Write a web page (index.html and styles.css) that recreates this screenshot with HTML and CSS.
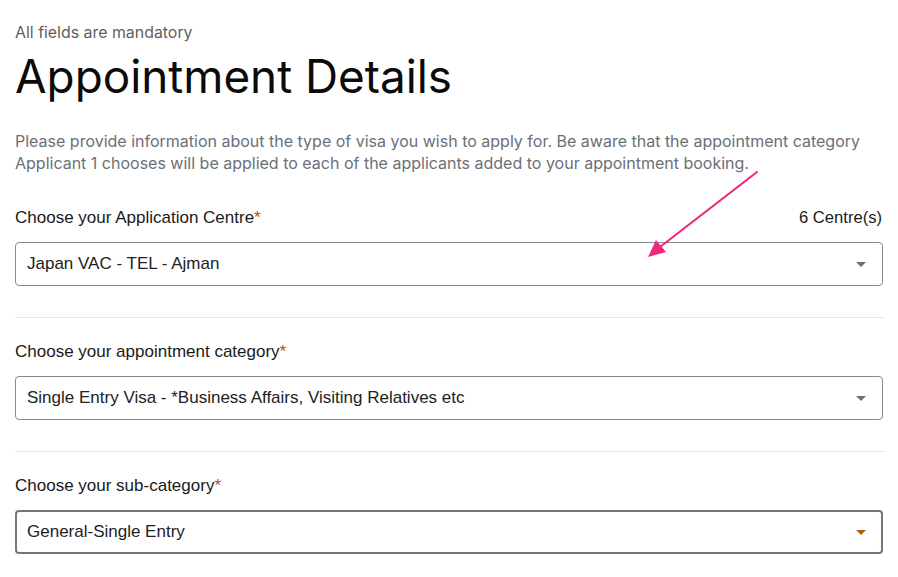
FILE: index.html
```html
<!DOCTYPE html>
<html lang="en">
<head>
<meta charset="utf-8">
<title>Appointment Details</title>
<link rel="stylesheet" href="styles.css">
</head>
<body>
<main class="page">
  <p class="note">All fields are mandatory</p>
  <h1 class="title">Appointment Details</h1>
  <p class="intro">Please provide information about the type of visa you wish to apply for. Be aware that the appointment category Applicant 1 chooses will be applied to each of the applicants added to your appointment booking.</p>

  <section class="field">
    <div class="label-row">
      <span class="label">Choose your Application Centre<span class="req">*</span></span>
      <span class="count">6 Centre(s)</span>
    </div>
    <div class="select">
      <span class="value">Japan VAC - TEL - Ajman</span>
      <span class="caret"></span>
    </div>
  </section>
  <hr class="divider">

  <section class="field">
    <div class="label-row">
      <span class="label">Choose your appointment category<span class="req">*</span></span>
    </div>
    <div class="select">
      <span class="value">Single Entry Visa - *Business Affairs, Visiting Relatives etc</span>
      <span class="caret"></span>
    </div>
  </section>
  <hr class="divider">

  <section class="field">
    <div class="label-row">
      <span class="label">Choose your sub-category<span class="req">*</span></span>
    </div>
    <div class="select select-focus">
      <span class="value">General-Single Entry</span>
      <span class="caret caret-accent"></span>
    </div>
  </section>

  <svg class="pointer" width="898" height="577" viewBox="0 0 898 577" aria-hidden="true">
    <line x1="757" y1="172" x2="660" y2="247" stroke="#ee2a7f" stroke-width="2.2" stroke-linecap="round"/>
    <polygon points="648,257 656,240 666,252" fill="#ee2a7f"/>
  </svg>
</main>
</body>
</html>
```

FILE: styles.css
```css
* { box-sizing: border-box; }
html, body { margin: 0; padding: 0; background: #fff; }
body { font-family: Inter, "Liberation Sans", Arial, sans-serif; }

.page {
  position: relative;
  width: 898px;
  min-height: 577px;
  padding: 23px 14px 0 15px;
}

.note {
  margin: 0;
  font-size: 15.9px;
  line-height: 20px;
  color: #5f5f5f;
}

.title {
  margin: 5px 0 0;
  font-size: 45.8px;
  line-height: 58px;
  font-weight: 400;
  color: #0b0b0b;
  letter-spacing: 0;
}

.intro {
  margin: 24px 0 0;
  font-size: 16px;
  line-height: 22px;
  color: #6b6f78;
  max-width: 870px;
}

.field { margin-top: 34px; }
.divider + .field { margin-top: 24px; }

.label-row {
  display: flex;
  justify-content: space-between;
  align-items: center;
  width: 867px;
  font-family: "Liberation Sans", Arial, sans-serif;
  font-size: 17px;
  line-height: 20px;
  color: #1a1a1a;
}
.req { color: #b45309; }
.count { color: #1a1a1a; font-size: 16.6px; }

.select {
  margin-top: 14px;
  width: 868px;
  height: 44px;
  border: 1px solid #8a8a8a;
  border-radius: 4px;
  display: flex;
  align-items: center;
  justify-content: space-between;
  padding: 0 16px 0 11px;
  font-family: "Liberation Sans", Arial, sans-serif;
  font-size: 17px;
  color: #222;
  background: #fff;
}
.select-focus {
  border: 2px solid #767676;
  padding-left: 10px;
  padding-right: 15px;
}

.caret {
  width: 0;
  height: 0;
  border-left: 5px solid transparent;
  border-right: 5px solid transparent;
  border-top: 5px solid #6f6f6f;
}
.caret-accent { border-top-color: #b45f06; }

.divider {
  margin: 31px 0 0;
  width: 869px;
  border: 0;
  border-top: 1px solid #e6e6e6;
  height: 0;
}

.pointer {
  position: absolute;
  left: 0;
  top: 0;
  pointer-events: none;
}
```
